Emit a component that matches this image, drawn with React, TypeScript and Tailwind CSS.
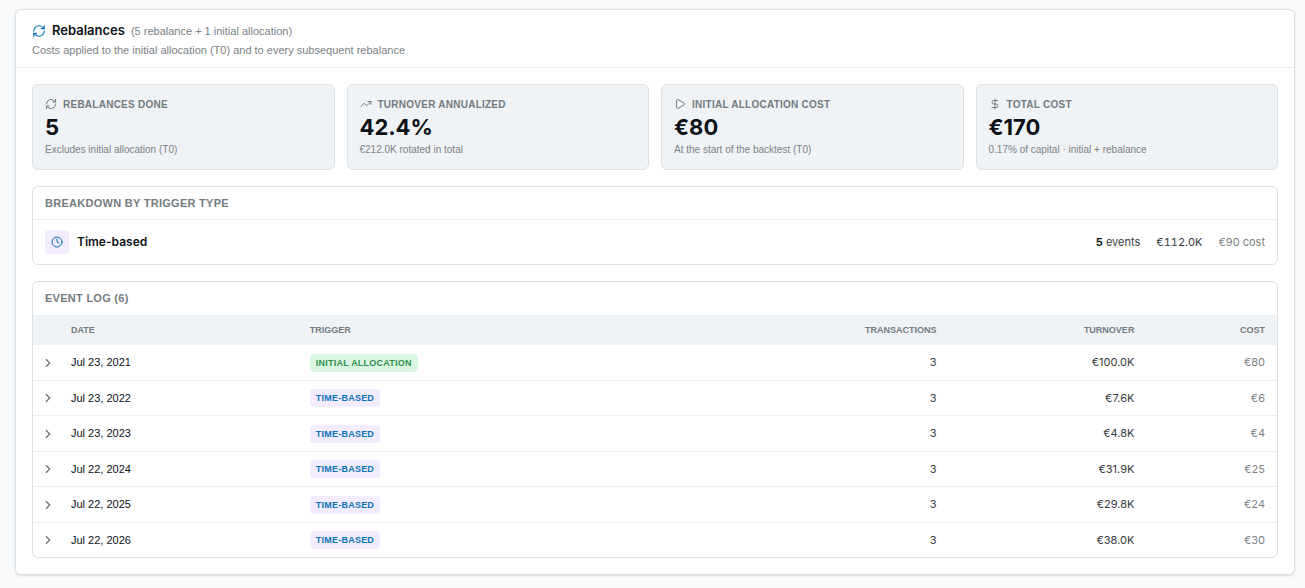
import type { ReactNode } from 'react';
import { ChevronRight, Clock, DollarSign, Play, RefreshCw, TrendingUp } from 'lucide-react';

type Stat = { label: string; value: string; note: string; icon: ReactNode };

const stats: Stat[] = [
  { label: 'Rebalances done', value: '5', note: 'Excludes initial allocation (T0)', icon: <RefreshCw size={12} strokeWidth={2} /> },
  { label: 'Turnover annualized', value: '42.4%', note: '€212.0K rotated in total', icon: <TrendingUp size={12} strokeWidth={2} /> },
  { label: 'Initial allocation cost', value: '€80', note: 'At the start of the backtest (T0)', icon: <Play size={12} strokeWidth={2} /> },
  { label: 'Total cost', value: '€170', note: '0.17% of capital · initial + rebalance', icon: <DollarSign size={12} strokeWidth={2} /> },
];

const events = [
  { date: 'Jul 23, 2021', initial: true, turnover: '€100.0K', cost: '€80' },
  { date: 'Jul 23, 2022', initial: false, turnover: '€7.6K', cost: '€6' },
  { date: 'Jul 23, 2023', initial: false, turnover: '€4.8K', cost: '€4' },
  { date: 'Jul 22, 2024', initial: false, turnover: '€31.9K', cost: '€25' },
  { date: 'Jul 22, 2025', initial: false, turnover: '€29.8K', cost: '€24' },
  { date: 'Jul 22, 2026', initial: false, turnover: '€38.0K', cost: '€30' },
];

function StatCard({ label, value, note, icon }: Stat) {
  return (
    <div className="rounded-md border border-[#dce1e5] bg-[#eff3f6] px-3 pt-[11px] pb-3">
      <div className="flex h-4 items-center gap-1.5 text-[10px] font-semibold tracking-wide text-[#737b7f] uppercase">
        {icon}
        <span>{label}</span>
      </div>
      <div className="font-['Inter',sans-serif] text-[22px] leading-[31px] font-bold text-[#0c1116]">{value}</div>
      <div className="text-[10px] leading-[14px] text-[#7b8184]">{note}</div>
    </div>
  );
}

export default function App() {
  return (
    <main className="min-h-screen bg-[#f9fafc] px-[10px] pt-[9px] pb-3 pl-[15px] font-['Liberation_Sans','Inter',sans-serif] text-[#0c1116]">
      <section className="rounded-md border border-[#dce1e5] bg-white shadow-sm">
        <header className="border-b border-[#eceef0] px-4 pt-3 pb-[9px]">
          <div className="flex h-[18px] items-center gap-1.5">
            <RefreshCw size={14} strokeWidth={2} className="text-[#0a73b7]" />
            <h2 className="font-['Inter',sans-serif] text-[13px] font-semibold">Rebalances</h2>
            <span className="text-[11px] text-[#7b8184]">(5 rebalance + 1 initial allocation)</span>
          </div>
          <p className="mt-0.5 text-[11px] leading-4 text-[#7b8184]">
            Costs applied to the initial allocation (T0) and to every subsequent rebalance
          </p>
        </header>

        <div className="flex flex-col gap-4 p-4">
          <div className="grid grid-cols-4 gap-3">
            {stats.map((s) => (
              <StatCard key={s.label} {...s} />
            ))}
          </div>

          <section className="rounded-md border border-[#dce1e5]">
            <h3 className="border-b border-[#eceef0] px-3 py-2 text-[11px] leading-4 font-semibold tracking-wide text-[#737b7f] uppercase">
              Breakdown by trigger type
            </h3>
            <div className="flex items-center justify-between px-3 py-[10px]">
              <div className="flex items-center gap-2">
                <span className="flex size-6 items-center justify-center rounded bg-[#f3ecfe] text-[#0a73b7]">
                  <Clock size={12} strokeWidth={2} />
                </span>
                <span className="font-['Inter',sans-serif] text-[12px] font-semibold">Time-based</span>
              </div>
              <div className="flex items-center gap-4 font-['Inter',sans-serif] text-[11px] text-[#363c40]">
                <span>
                  <strong className="font-bold text-[#0c1116]">5</strong> events
                </span>
                <span className="tabular-nums">€112.0K</span>
                <span className="text-[#7b8184]">€90 cost</span>
              </div>
            </div>
          </section>

          <section className="overflow-hidden rounded-md border border-[#dce1e5]">
            <h3 className="px-3 pt-2 pb-[9px] text-[11px] leading-4 font-semibold tracking-wide text-[#737b7f] uppercase">
              Event log (6)
            </h3>
            <table className="w-full table-fixed border-separate border-spacing-0 text-[11px]">
              <thead className="bg-[#eff3f6] text-[9px] text-[#737b7f] uppercase">
                <tr className="h-[30px] *:pt-px">
                  <th className="w-[26px]" aria-label="Details" />
                  <th className="w-[19.2%] px-3 text-left font-semibold">Date</th>
                  <th className="px-3 text-left font-semibold">Trigger</th>
                  <th className="w-[20%] px-3 text-right font-semibold">Transactions</th>
                  <th className="w-[15.9%] px-3 text-right font-semibold">Turnover</th>
                  <th className="w-[10.5%] px-3 text-right font-semibold">Cost</th>
                </tr>
              </thead>
              <tbody>
                {events.map((e) => (
                  <tr key={e.date} className="odd:h-[36px] not-last:even:h-[35px] last:h-[34px] not-last:*:border-b *:border-[#eceef0]">
                    <td className="pl-2">
                      <button type="button" aria-label={`Show ${e.date}`} className="flex items-center text-[#686f73]">
                        <ChevronRight size={14} strokeWidth={2} />
                      </button>
                    </td>
                    <td className="px-3">{e.date}</td>
                    <td className="px-3">
                      <span
                        className={
                          e.initial
                            ? 'inline-block rounded bg-[#dbf6e2] px-1.5 align-middle text-[9px] leading-[18px] font-semibold tracking-wide text-[#2f9150] uppercase'
                            : 'inline-block rounded bg-[#f3ecfe] px-1.5 align-middle text-[9px] leading-[18px] font-semibold tracking-wide text-[#0a73b7] uppercase'
                        }
                      >
                        {e.initial ? 'Initial allocation' : 'Time-based'}
                      </span>
                    </td>
                    <td className="px-3 text-right font-['Inter',sans-serif] text-[#363c40]">3</td>
                    <td className="px-3 text-right font-['Inter',sans-serif] text-[#363c40]">{e.turnover}</td>
                    <td className="px-3 text-right font-['Inter',sans-serif] text-[#7b8184]">{e.cost}</td>
                  </tr>
                ))}
              </tbody>
            </table>
          </section>
        </div>
      </section>
    </main>
  );
}
